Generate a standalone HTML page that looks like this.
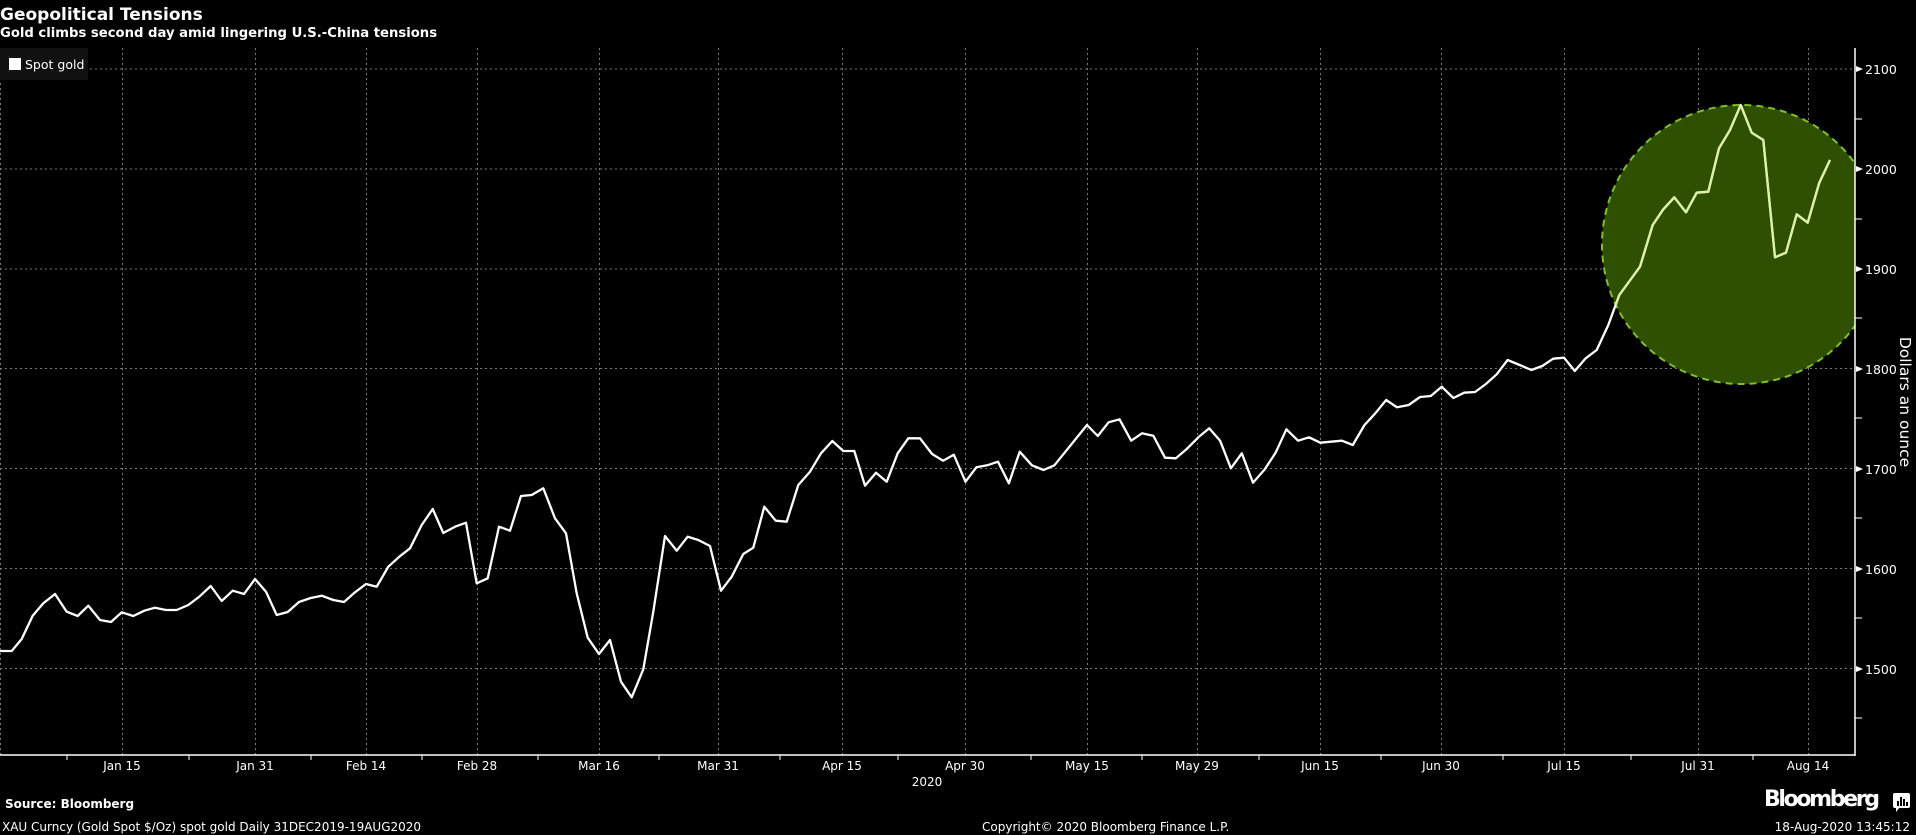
<!DOCTYPE html>
<html><head><meta charset="utf-8"><style>
html,body{margin:0;padding:0;background:#000;width:1916px;height:835px;overflow:hidden}
svg{display:block}
text{font-family:"DejaVu Sans","Liberation Sans",sans-serif;fill:#fff}
</style></head><body>
<svg width="1916" height="835" viewBox="0 0 1916 835" xmlns="http://www.w3.org/2000/svg">
<defs>
<clipPath id="cc"><circle cx="1741.5" cy="244.5" r="139.5"/></clipPath>
<clipPath id="plot"><rect x="0" y="40" width="1855" height="716"/></clipPath>
<polyline id="ln" fill="none" stroke-width="2.3" stroke-linejoin="round" points="0,651 11.7,651 21.7,639 32.7,615.7 43.3,603.3 55,594 66.7,611.7 77.7,616 88.3,605.7 100,620 111,622 121.7,612.3 133.3,616 144.3,610.7 155,607.7 166,610 176.7,610 188.3,605 199.3,596.7 210.7,586 221.7,601 232.7,590.7 244,594 255,579 266,591.7 276.7,615 287.7,612 299,602 310.7,598 321.7,595.7 333.3,600 344,602 355,592.3 366,584 376.7,586.7 388.3,566.7 399.3,556.7 410,548.3 421.7,525 432.7,509 443.3,533 455,526.7 466,522.7 476.7,583.3 487.7,578.3 499,526.7 510,530.7 521,496 531.7,495 543.3,488.3 555,518.3 566,533.3 576.7,593.3 587.7,637.7 599,654 610,640 621,681.7 631.7,697.3 643.3,669.3 653.3,611.7 665,536 676.7,550.7 687.7,536.7 698.3,540 710,546 721,590.7 731.7,576.7 743.3,554 753.3,547.7 764.3,506.7 775.7,520.7 786.7,521.7 798.3,485 810,471.7 821,453.3 832.3,441 843.3,451 854.3,451 865,485.7 876,472.7 886.7,481.7 897.7,453.3 908.3,438.3 920,438.3 932.1,454 943,460.7 953.8,454.7 965.5,481.7 976.4,467.3 987.2,465.3 998,461.7 1008.9,483.3 1019.7,451.7 1031.9,465.3 1043.6,470 1054.4,465.3 1087,425 1097.8,436 1108.6,422.3 1119.5,419.3 1131.2,440.7 1142,433.3 1153.3,435.7 1165,457.7 1175.9,458.3 1186.7,449 1198.4,437.3 1209.2,428.3 1220.1,440.7 1230.9,468.3 1241.8,453.3 1253,482.7 1264.8,469.3 1275.6,452.7 1286.4,429.3 1298.1,440.7 1309,437.3 1320.3,442.7 1341.9,440.7 1352.8,445 1364.5,425 1375.3,413.3 1386.2,400 1397,407.3 1408.7,405 1420,397 1430.8,396 1441.7,386.7 1453.4,398 1464.2,392.7 1475.1,392 1485.9,384 1496.7,374.3 1507.6,360 1519.7,365 1531.4,370 1542.3,366 1553.1,358.7 1564,357.7 1574.8,371 1585.7,358.3 1596.7,350 1608.3,325 1619.3,295 1640,266.7 1652.7,225 1663.3,209.3 1674.3,197.3 1686,212.3 1696.7,192.7 1708.3,191.7 1719,148.3 1730,130 1740.7,105 1751.7,132.7 1763.3,140 1775,257.3 1786,252.7 1796.7,214.3 1807.7,222.7 1819.3,182.7 1830,160"/>
</defs>
<rect width="1916" height="835" fill="#000"/>
<text x="0" y="20" font-size="17" font-weight="bold">Geopolitical Tensions</text>
<text x="0" y="37" font-size="13.2" font-weight="bold">Gold climbs second day amid lingering U.S.-China tensions</text>

<g stroke="#777" stroke-width="1" stroke-dasharray="2,3">
<line x1="0" y1="69" x2="1855" y2="69"/>
<line x1="0" y1="169" x2="1855" y2="169"/>
<line x1="0" y1="269" x2="1855" y2="269"/>
<line x1="0" y1="368.5" x2="1855" y2="368.5"/>
<line x1="0" y1="468.5" x2="1855" y2="468.5"/>
<line x1="0" y1="568.5" x2="1855" y2="568.5"/>
<line x1="0" y1="668.5" x2="1855" y2="668.5"/>
<line x1="0.5" y1="48" x2="0.5" y2="755"/>
<line x1="122.5" y1="48" x2="122.5" y2="755"/>
<line x1="255.5" y1="48" x2="255.5" y2="755"/>
<line x1="366.5" y1="48" x2="366.5" y2="755"/>
<line x1="477.5" y1="48" x2="477.5" y2="755"/>
<line x1="599.5" y1="48" x2="599.5" y2="755"/>
<line x1="718.5" y1="48" x2="718.5" y2="755"/>
<line x1="842.5" y1="48" x2="842.5" y2="755"/>
<line x1="965.5" y1="48" x2="965.5" y2="755"/>
<line x1="1087.5" y1="48" x2="1087.5" y2="755"/>
<line x1="1197.5" y1="48" x2="1197.5" y2="755"/>
<line x1="1320.5" y1="48" x2="1320.5" y2="755"/>
<line x1="1441.5" y1="48" x2="1441.5" y2="755"/>
<line x1="1564.5" y1="48" x2="1564.5" y2="755"/>
<line x1="1698.5" y1="48" x2="1698.5" y2="755"/>
<line x1="1808.5" y1="48" x2="1808.5" y2="755"/>
</g>

<g clip-path="url(#plot)">
<circle cx="1741.5" cy="244.5" r="139.5" fill="#2f5000" stroke="#7fbf2a" stroke-width="2" stroke-dasharray="7,5"/>
</g>

<use href="#ln" stroke="#fff"/>
<g clip-path="url(#cc)"><use href="#ln" stroke="#dcf2a8"/></g>

<rect x="0" y="48" width="88" height="32" fill="#111"/>
<rect x="9" y="58" width="12" height="12" fill="#fff"/>
<text x="25" y="69" font-size="12.5">Spot gold</text>

<line x1="1855" y1="48" x2="1855" y2="756" stroke="#fff" stroke-width="1.5"/>
<line x1="0" y1="755" x2="1855" y2="755" stroke="#fff" stroke-width="1.5"/>
<g stroke="#fff" stroke-width="1">
<line x1="1855" y1="119" x2="1862" y2="119"/><line x1="1855" y1="219" x2="1862" y2="219"/>
<line x1="1855" y1="318" x2="1862" y2="318"/><line x1="1855" y1="418" x2="1862" y2="418"/>
<line x1="1855" y1="518" x2="1862" y2="518"/><line x1="1855" y1="618" x2="1862" y2="618"/>
<line x1="1855" y1="718" x2="1862" y2="718"/>
<line x1="67" y1="755" x2="67" y2="760"/><line x1="189" y1="755" x2="189" y2="760"/>
<line x1="311" y1="755" x2="311" y2="760"/><line x1="422" y1="755" x2="422" y2="760"/>
<line x1="538" y1="755" x2="538" y2="760"/><line x1="659" y1="755" x2="659" y2="760"/>
<line x1="780" y1="755" x2="780" y2="760"/><line x1="898" y1="755" x2="898" y2="760"/>
<line x1="1031" y1="755" x2="1031" y2="760"/><line x1="1142" y1="755" x2="1142" y2="760"/>
<line x1="1259" y1="755" x2="1259" y2="760"/><line x1="1381" y1="755" x2="1381" y2="760"/>
<line x1="1503" y1="755" x2="1503" y2="760"/><line x1="1631" y1="755" x2="1631" y2="760"/>
<line x1="1753" y1="755" x2="1753" y2="760"/>
</g>
<g fill="#fff">
<polygon points="1856,66 1863,69 1856,72"/><polygon points="1856,166 1863,169 1856,172"/>
<polygon points="1856,266 1863,269 1856,272"/><polygon points="1856,366 1863,369 1856,372"/>
<polygon points="1856,466 1863,469 1856,472"/><polygon points="1856,566 1863,569 1856,572"/>
<polygon points="1856,666 1863,669 1856,672"/>
</g>
<g font-size="12.5">
<text x="1865" y="74">2100</text><text x="1865" y="174">2000</text>
<text x="1865" y="274">1900</text><text x="1865" y="374">1800</text>
<text x="1865" y="474">1700</text><text x="1865" y="574">1600</text>
<text x="1865" y="674">1500</text>
</g>
<text transform="translate(1900,402) rotate(90)" font-size="15.5" text-anchor="middle">Dollars an ounce</text>

<g font-size="12" text-anchor="middle">
<text x="122" y="770">Jan 15</text><text x="255" y="770">Jan 31</text>
<text x="366" y="770">Feb 14</text><text x="477" y="770">Feb 28</text>
<text x="599" y="770">Mar 16</text><text x="718" y="770">Mar 31</text>
<text x="842" y="770">Apr 15</text><text x="965" y="770">Apr 30</text>
<text x="1087" y="770">May 15</text><text x="1197" y="770">May 29</text>
<text x="1320" y="770">Jun 15</text><text x="1441" y="770">Jun 30</text>
<text x="1564" y="770">Jul 15</text><text x="1698" y="770">Jul 31</text>
<text x="1808" y="770">Aug 14</text>
<text x="927" y="786">2020</text>
</g>

<text x="5" y="808" font-size="12" font-weight="bold">Source: Bloomberg</text>
<text x="2" y="831" font-size="12">XAU Curncy (Gold Spot   $/Oz) spot gold  Daily 31DEC2019-19AUG2020</text>
<text x="982" y="831" font-size="12">Copyright© 2020 Bloomberg Finance L.P.</text>
<text x="1910" y="831" font-size="12" text-anchor="end">18-Aug-2020 13:45:12</text>
<text x="1764" y="806" font-size="22" font-weight="bold" font-family="Liberation Sans" textLength="116">Bloomberg</text>
<rect x="1893" y="793" width="17" height="15" rx="2" fill="#fff"/>
<polygon points="1896,807 1900,807 1896,812" fill="#fff"/>
<g fill="#000"><rect x="1897" y="801" width="2" height="5"/><rect x="1900" y="797" width="2" height="9"/><rect x="1903" y="799" width="2" height="7"/><rect x="1906" y="802" width="2" height="4"/></g>
</svg>
</body></html>
